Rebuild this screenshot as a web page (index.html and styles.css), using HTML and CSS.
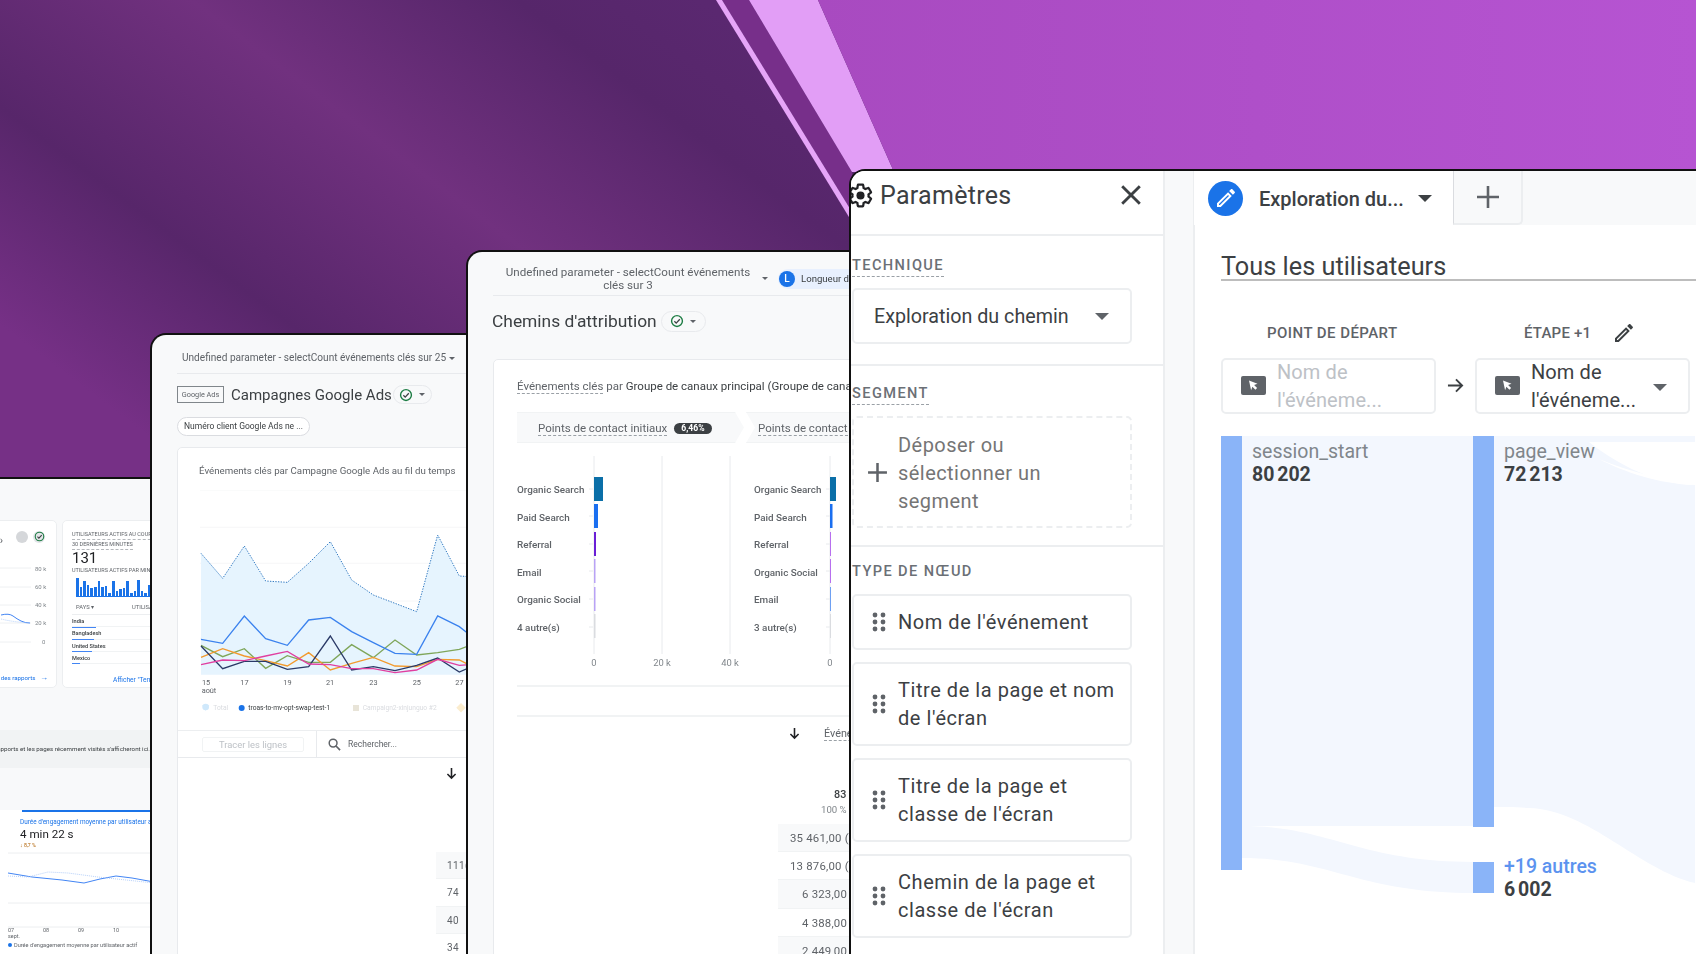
FILE: index.html
```html
<!DOCTYPE html>
<html lang="fr">
<head>
<meta charset="utf-8">
<title>Google Analytics : explorations</title>
<link rel="stylesheet" href="styles.css">
</head>
<body>
<svg width="0" height="0" class="defs">
  <symbol id="i-check" viewBox="0 0 16 16"><circle cx="8" cy="8" r="6.2" fill="none" stroke="#1e7d45" stroke-width="1.6"/><path d="M5 8.3l2.1 2.1L11.2 6" fill="none" stroke="#3c4043" stroke-width="1.5"/></symbol>
  <symbol id="i-pencil" viewBox="0 0 24 24"><path d="M14.06 9.02l.92.92L5.92 19H5v-.92l9.06-9.06M17.66 3c-.25 0-.51.1-.7.29l-1.83 1.83 3.75 3.75 1.83-1.83c.39-.39.39-1.02 0-1.41l-2.34-2.34c-.2-.2-.45-.29-.71-.29zm-3.6 3.19L3 17.25V21h3.75L17.81 9.94l-3.75-3.75z"/></symbol>
  <symbol id="i-grip" viewBox="0 0 14 20"><circle cx="3" cy="3" r="2.4"/><circle cx="11" cy="3" r="2.4"/><circle cx="3" cy="10" r="2.4"/><circle cx="11" cy="10" r="2.4"/><circle cx="3" cy="17" r="2.4"/><circle cx="11" cy="17" r="2.4"/></symbol>
  <symbol id="i-cursor" viewBox="0 0 25 19"><rect width="25" height="19" rx="2" fill="#5f6368"/><path d="M8 4.5l8.5 3.3-3.4 1.3 3 3-1.7 1.7-3-3-1.3 3.4z" fill="#fff"/></symbol>
  <symbol id="i-arrow-down" viewBox="0 0 12 14"><path d="M6 1v11M1.6 7.6L6 12l4.4-4.4" fill="none" stroke="#202124" stroke-width="1.7"/></symbol>
</svg>

<main class="desktop">
  <svg class="wallpaper" viewBox="0 0 1696 954" aria-hidden="true">
    <defs>
      <linearGradient id="bg-dark" gradientUnits="userSpaceOnUse" x1="-156" y1="208" x2="252" y2="-336">
        <stop offset="0" stop-color="#763086"/>
        <stop offset=".257" stop-color="#57266a"/>
        <stop offset=".551" stop-color="#71317f"/>
        <stop offset=".838" stop-color="#56266a"/>
        <stop offset="1" stop-color="#5a2870"/>
      </linearGradient>
      <linearGradient id="bg-light" x1="0" y1="0" x2="1" y2="0">
        <stop offset="0" stop-color="#a84ac0"/>
        <stop offset="1" stop-color="#b654d2"/>
      </linearGradient>
    </defs>
    <rect width="1696" height="954" fill="url(#bg-dark)"/>
    <polygon points="722,0 749,0 852,172 852,212" fill="#772f8a"/>
    <polygon points="716,0 722,0 852,212 852,222" fill="#e6a5f8"/>
    <polygon points="749,0 818,0 894,172 852,172" fill="#e29ef6"/>
    <polygon points="818,0 1696,0 1696,172 894,172" fill="url(#bg-light)"/>
  </svg>

  <!-- Fenêtre 1 : aperçu -->
  <section class="win win-a">
    <div class="a-cards">
      <div class="a-card a-card-chart">
        <div class="a-tools">
          <span class="a-chev">›</span>
          <span class="a-tool a-tool-grey"></span>
          <span class="a-tool"><svg class="ic-10"><use href="#i-check"/></svg></span>
        </div>
        <svg class="a-chart" viewBox="0 0 155 112">
          <g fill="none" stroke="#eef0f2"><path d="M0 6h135M0 25h135M0 43h135M0 61h135M0 80h135"/></g>
          <g class="tick"><text x="139" y="9">80 k</text><text x="139" y="27">60 k</text><text x="139" y="45">40 k</text><text x="139" y="63">20 k</text><text x="146" y="82">0</text></g>
          <path d="M105 53q8-2 12 1t8 5 9 2" fill="none" stroke="#4285f4" stroke-width="1"/>
          <path d="M105 57q12 3 29 4" fill="none" stroke="#a3c4f7" stroke-width=".8" stroke-dasharray="1 1"/>
        </svg>
        <div class="a-foot">des rapports <span class="a-arrow">→</span></div>
      </div>
      <div class="a-card a-card-live">
        <p class="a-cap a-dash">UTILISATEURS ACTIFS AU COURS DES</p>
        <p class="a-cap a-dash">30 DERNIÈRES MINUTES</p>
        <p class="a-num">131</p>
        <p class="a-cap">UTILISATEURS ACTIFS PAR MINUTE</p>
        <div class="a-bars">
          <i class="h20"></i><i class="h9"></i><i class="h15"></i><i class="h11"></i><i class="h8"></i><i class="h9"></i><i class="h15"></i><i class="h9"></i><i class="h10"></i><i class="h3"></i><i class="h15"></i><i class="h5"></i><i class="h7"></i><i class="h8"></i><i class="h15"></i><i class="h3"></i><i class="h5"></i><i class="h16"></i><i class="h5"></i><i class="h3"></i><i class="h11"></i>
        </div>
        <div class="a-head"><span>PAYS ▾</span><span>UTILISATEURS</span></div>
        <div class="a-row"><span>India</span><i class="w24"></i></div>
        <div class="a-row"><span>Bangladesh</span><i class="w22"></i></div>
        <div class="a-row"><span>United States</span><i class="w20"></i></div>
        <div class="a-row"><span>Mexico</span><i class="w8"></i></div>
        <div class="a-link">Afficher "Temps réel"</div>
      </div>
    </div>
    <div class="a-band">Les rapports et les pages récemment visités s'afficheront ici.</div>
    <div class="a-panel">
      <div class="a-panel-rule"></div>
      <p class="a-metric-name">Durée d'engagement moyenne par utilisateur actif</p>
      <p class="a-metric">4 min 22 s</p>
      <p class="a-delta">↓ 8,7 %</p>
      <svg class="a-mini" viewBox="0 0 146 76">
        <g fill="none" stroke="#eceef0"><path d="M0 1h146M0 51h146M0 75h146"/></g>
        <path d="M0 21l24 4 30 3 22 3 16-4 16-3 16 2 22 4" fill="none" stroke="#4285f4" stroke-width="1"/>
        <path d="M0 24l20 1 20-5 20 1 30 4 56 6" fill="none" stroke="#a3c4f7" stroke-width=".8" stroke-dasharray="1 1"/>
      </svg>
      <div class="a-axis"><span>07<br>sept.</span><span>08</span><span>09</span><span>10</span></div>
      <p class="a-legend"><b></b>Durée d'engagement moyenne par utilisateur actif</p>
    </div>
  </section>

  <!-- Fenêtre 2 : campagnes -->
  <section class="win win-b">
    <div class="b-top">Undefined parameter - selectCount événements clés sur 25 <span class="tiny-caret"></span></div>
    <div class="b-title">
      <span class="b-logo">Google Ads</span>
      <h2>Campagnes Google Ads</h2>
      <span class="pill pill-b"><svg class="ic-12"><use href="#i-check"/></svg><span class="tiny-caret"></span></span>
    </div>
    <span class="b-chip">Numéro client Google Ads ne ...</span>
    <div class="b-card">
      <p class="b-card-title">Événements clés par Campagne Google Ads au fil du temps</p>
      <svg class="b-chart" viewBox="0 -90 840 720" width="280" height="240">
        <g stroke="#f1f3f4" stroke-width="2"><path d="M30 -90H840M30 22H840M30 130H840M30 243H840M30 355H840"/></g>
        <path d="M33 100L98 175 163 78 227 183 292 187 356 130 421 65 485 180 550 225 615 250 680 275 743 45 808 168 840 170V464H33Z" fill="#e6f4fe"/>
        <path d="M33 100L98 175 163 78 227 183 292 187 356 130 421 65 485 180 550 225 615 250 680 275 743 45 808 168 840 170" fill="none" stroke="#2f78c0" stroke-width="3" stroke-dasharray="4 4"/>
        <g fill="none" stroke-width="4">
          <polyline stroke="#7fa65a" points="33,376 98,410 163,386 227,445 292,407 356,427 421,427 485,374 550,413 615,360 680,405 743,398 808,388 840,376"/>
          <polyline stroke="#f29a2e" points="33,412 98,386 163,408 227,422 292,438 356,398 421,450 485,430 550,412 615,438 680,440 743,418 808,420 840,436"/>
          <polyline stroke="#2b3a67" points="33,378 98,446 163,424 227,424 292,448 356,440 421,348 485,450 550,440 615,452 680,436 743,414 808,456 840,442"/>
          <polyline stroke="#e03fa0" points="33,434 98,420 163,422 227,408 292,394 356,432 421,434 485,446 550,446 615,458 680,450 743,418 808,436 840,434"/>
          <polyline stroke="#3b82ee" points="33,358 98,370 163,288 227,356 292,376 356,300 421,292 485,335 550,368 615,400 680,403 743,288 808,320 840,345"/>
        </g>
        <g class="b-tick">
          <text x="36" y="494">15</text><text x="35" y="518">août</text><text x="151" y="494">17</text><text x="280" y="494">19</text><text x="408" y="494">21</text><text x="538" y="494">23</text><text x="668" y="494">25</text><text x="796" y="494">27</text>
        </g>
        <path d="M36 556h22l-11 16z" fill="#cfe8fb"/><circle cx="47" cy="561" r="10" fill="#cfe8fb"/>
        <text x="70" y="571" class="b-leg-off">Total</text>
        <circle cx="155" cy="564" r="9" fill="#1a73e8"/>
        <text x="175" y="571" class="b-leg-on">troas-to-mv-opt-swap-test-1</text>
        <rect x="489" y="555" width="18" height="18" fill="#e8e4d8"/>
        <text x="518" y="571" class="b-leg-off">Campaign2-xinjunguo #2</text>
        <rect x="803" y="553" width="20" height="20" transform="rotate(45 813 563)" fill="#fbeccd"/>
      </svg>
      <div class="b-tools">
        <span class="b-trace">Tracer les lignes</span>
        <span class="b-search">
          <svg class="ic-14" viewBox="0 0 14 14"><circle cx="5.5" cy="5.5" r="4.2" fill="none" stroke="#5f6368" stroke-width="1.6"/><path d="M8.6 8.6L13 13" stroke="#5f6368" stroke-width="1.8"/></svg>
          Rechercher...
        </span>
      </div>
      <div class="b-sort"><svg class="ic-12"><use href="#i-arrow-down"/></svg></div>
      <div class="b-rows">
        <div class="b-row b-alt">111(</div>
        <div class="b-row">74</div>
        <div class="b-row b-alt">40</div>
        <div class="b-row">34</div>
      </div>
    </div>
  </section>

  <!-- Fenêtre 3 : chemins d'attribution -->
  <section class="win win-c">
    <div class="c-top">
      <div class="c-param">Undefined parameter - selectCount événements clés sur 3</div>
      <span class="tiny-caret c-caret"></span>
      <span class="c-seg"><b>L</b><span>Longueur du chemin</span></span>
    </div>
    <div class="c-title">
      <h2>Chemins d'attribution</h2>
      <span class="pill pill-c"><svg class="ic-12"><use href="#i-check"/></svg><span class="tiny-caret"></span></span>
    </div>
    <div class="c-card">
      <p class="c-card-title"><span class="dash">Événements clés</span> par <span class="dark">Groupe de canaux principal (Groupe de canaux par défaut)</span></p>
      <div class="c-steps">
        <div class="c-step c-step-first"><span class="dash">Points de contact initiaux</span><em>6,46%</em></div>
        <div class="c-step c-step-next"><span class="dash">Points de contact</span></div>
      </div>
      <svg class="c-chart" viewBox="517 457 332 230" width="332" height="230">
        <path d="M594 457V655M662 457V655M730 457V655M830 457V655" stroke="#e8eaed"/>
        <path d="M589 490h4M589 517h4M589 545h4M589 572h4M589 600h4M589 628h4M826 490h4M826 517h4M826 545h4M826 572h4M826 600h4M826 628h4" stroke="#e8eaed"/>
        <g class="c-label">
          <text x="517" y="494">Organic Search</text><text x="517" y="522">Paid Search</text><text x="517" y="549">Referral</text><text x="517" y="577">Email</text><text x="517" y="604">Organic Social</text><text x="517" y="632">4 autre(s)</text>
          <text x="754" y="494">Organic Search</text><text x="754" y="522">Paid Search</text><text x="754" y="549">Referral</text><text x="754" y="577">Organic Social</text><text x="754" y="604">Email</text><text x="754" y="632">3 autre(s)</text>
        </g>
        <rect x="594" y="478" width="9" height="24" fill="#0b6fa8"/>
        <rect x="594" y="505" width="4" height="24" fill="#1a6ff0"/>
        <rect x="594" y="533" width="2" height="24" fill="#6a1fd6"/>
        <rect x="594" y="560" width="1.5" height="24" fill="#b9a3f5"/>
        <rect x="594" y="588" width="1.5" height="24" fill="#b9a3f5"/>
        <rect x="594" y="615" width="1.5" height="24" fill="#dadce0"/>
        <rect x="830" y="478" width="6" height="24" fill="#0b6fa8"/>
        <rect x="830" y="505" width="2.5" height="24" fill="#1a6ff0"/>
        <rect x="830" y="533" width="1" height="24" fill="#b76fee"/>
        <rect x="830" y="560" width="1" height="24" fill="#b76fee"/>
        <rect x="830" y="588" width="1" height="24" fill="#6ea0f2"/>
        <rect x="830" y="615" width="1" height="24" fill="#dadce0"/>
        <g class="c-tick"><text x="594" y="667">0</text><text x="662" y="667">20 k</text><text x="730" y="667">40 k</text><text x="830" y="667">0</text></g>
      </svg>
      <div class="c-rule"></div>
      <div class="c-table-head">
        <svg class="ic-12"><use href="#i-arrow-down"/></svg>
        <span class="dash c-col">Événements clés</span>
      </div>
      <div class="c-total"><strong>83 000,00</strong><small>100 % du total</small></div>
      <div class="c-rows">
        <div class="c-row c-alt c-r1">35 461,00 (42,7 %)</div>
        <div class="c-row c-r1">13 876,00 (16,7 %)</div>
        <div class="c-row c-alt c-r2">6 323,00 (7,6 %)</div>
        <div class="c-row c-r2">4 388,00 (5,3 %)</div>
        <div class="c-row c-alt c-r2">2 449,00 (2,9 %)</div>
      </div>
    </div>
  </section>

  <!-- Fenêtre 4 : exploration -->
  <section class="win win-d">
    <aside class="settings">
      <header class="set-head">
        <svg class="gear" viewBox="0 0 24 24"><path d="M19.14 12.94c.04-.3.06-.61.06-.94 0-.32-.02-.64-.07-.94l2.03-1.58c.18-.14.23-.41.12-.61l-1.92-3.32c-.12-.22-.37-.29-.59-.22l-2.39.96c-.5-.38-1.03-.7-1.62-.94l-.36-2.54c-.04-.24-.24-.41-.48-.41h-3.84c-.24 0-.43.17-.47.41l-.36 2.54c-.59.24-1.13.57-1.62.94l-2.39-.96c-.22-.08-.47 0-.59.22L2.74 8.87c-.12.21-.08.47.12.61l2.03 1.58c-.05.3-.09.63-.09.94s.02.64.07.94l-2.03 1.58c-.18.14-.23.41-.12.61l1.92 3.32c.12.22.37.29.59.22l2.39-.96c.5.38 1.03.7 1.62.94l.36 2.54c.05.24.24.41.48.41h3.84c.24 0 .44-.17.47-.41l.36-2.54c.59-.24 1.13-.56 1.62-.94l2.39.96c.22.08.47 0 .59-.22l1.92-3.32c.12-.22.07-.47-.12-.61l-2.01-1.58z" fill="none" stroke="#202124" stroke-width="2"/><circle cx="12" cy="12" r="3.6" fill="#202124"/></svg>
        <h1>Paramètres</h1>
        <svg class="close" viewBox="0 0 20 20"><path d="M2 2l16 16M18 2L2 18" stroke="#3c4043" stroke-width="2.6"/></svg>
      </header>
      <div class="set-sec set-tech">
        <span class="set-label dashed">TECHNIQUE</span>
        <div class="select">Exploration du chemin<span class="caret"></span></div>
      </div>
      <div class="set-sec set-seg">
        <span class="set-label dashed">SEGMENT</span>
        <div class="drop">
          <svg class="plus" viewBox="0 0 20 20"><path d="M10 1v18M1 10h18" stroke="#5f6368" stroke-width="2.4"/></svg>
          <span>Déposer ou sélectionner un segment</span>
        </div>
      </div>
      <div class="set-sec set-type">
        <span class="set-label">TYPE DE NŒUD</span>
        <div class="node"><svg class="grip"><use href="#i-grip"/></svg><span>Nom de l'événement</span></div>
        <div class="node node-2"><svg class="grip"><use href="#i-grip"/></svg><span>Titre de la page et nom de l'écran</span></div>
        <div class="node node-2"><svg class="grip"><use href="#i-grip"/></svg><span>Titre de la page et classe de l'écran</span></div>
        <div class="node node-2"><svg class="grip"><use href="#i-grip"/></svg><span>Chemin de la page et classe de l'écran</span></div>
      </div>
    </aside>
    <div class="work">
      <nav class="tabs">
        <div class="tab">
          <span class="tab-badge"><svg viewBox="0 0 24 24"><use href="#i-pencil"/></svg></span>
          <span class="tab-name">Exploration du...</span>
          <span class="caret caret-dark"></span>
        </div>
        <div class="tab-add"><svg viewBox="0 0 24 24"><path d="M12 1v22M1 12h22" stroke="#5f6368" stroke-width="2.6"/></svg></div>
      </nav>
      <div class="canvas">
        <div class="seg-name">Tous les utilisateurs</div>
        <div class="steps-head">
          <span class="step-h">POINT DE DÉPART</span>
          <span class="step-h step-edit">ÉTAPE +1 <svg class="edit"><use href="#i-pencil"/></svg></span>
        </div>
        <div class="steps-row">
          <div class="ev ev-off"><svg class="cur"><use href="#i-cursor"/></svg><span>Nom de l'événeme...</span></div>
          <svg class="to" viewBox="0 0 18 18"><path d="M1 9h15M9.5 2.5L16 9l-6.5 6.5" fill="none" stroke="#3c4043" stroke-width="2"/></svg>
          <div class="ev"><svg class="cur"><use href="#i-cursor"/></svg><span>Nom de l'événeme...</span><i class="caret"></i></div>
        </div>
        <svg class="sankey" viewBox="1222 436 474 518" width="474" height="518">
          <path d="M1243 436H1474V826H1243Z" fill="#f3f7fe"/>
          <path d="M1243 826C1330 826 1360 862 1474 862V893C1360 893 1330 858 1243 858Z" fill="#f3f7fe"/>
          <path d="M1495 436H1696V442H1495Z" fill="#f3f7fe"/>
          <path d="M1495 442H1590C1610 458 1650 484 1696 485V883C1640 870 1590 810 1530 808 1515 807 1505 807 1495 807Z" fill="#f3f7fe"/>
          <path d="M1600 459C1625 472 1660 484 1696 485 1660 478 1630 472 1600 459Z" fill="#fff"/>
          <rect x="1222" y="436" width="21" height="434" fill="#8ab4f8"/>
          <rect x="1474" y="436" width="21" height="391" fill="#8ab4f8"/>
          <rect x="1474" y="862" width="21" height="31" fill="#8ab4f8"/>
          <text x="1253" y="458" class="sk-name">session_start</text>
          <text x="1253" y="481" class="sk-val">80 202</text>
          <text x="1505" y="458" class="sk-name">page_view</text>
          <text x="1505" y="481" class="sk-val">72 213</text>
          <text x="1505" y="873" class="sk-more">+19 autres</text>
          <text x="1505" y="896" class="sk-val">6 002</text>
        </svg>
      </div>
    </div>
  </section>
</main>
</body>
</html>
```

FILE: styles.css
```css
* { box-sizing: border-box; }
html, body { margin: 0; padding: 0; height: 100%; overflow: hidden; }
body { font-family: Roboto, "Liberation Sans", sans-serif; color: #3c4043; }
h1, h2, p { margin: 0; font-weight: 400; }
.defs { position: absolute; }
.desktop { position: relative; width: 1696px; height: 954px; overflow: hidden; }
.wallpaper { position: absolute; inset: 0; width: 1696px; height: 954px; display: block; }

.win { position: absolute; overflow: hidden; background: #f8f9fa; border: 2px solid #111; border-bottom: 0; border-right: 0; border-top-left-radius: 16px; }
.win-a { left: -200px; top: 477px; width: 400px; height: 477px; filter: blur(.35px); }
.win-b { left: 150px; top: 333px; width: 340px; height: 621px; filter: blur(.3px); }
.win-c { left: 466px; top: 250px; width: 420px; height: 704px; filter: blur(.3px); }
.win-d { left: 849px; top: 169px; width: 847px; height: 785px; display: grid; grid-template-columns: 314px 1fr; background: #fff; }

.ic-10 { width: 11px; height: 11px; }
.ic-12 { width: 13px; height: 13px; flex: none; }
.ic-14 { width: 13px; height: 13px; flex: none; }
.tiny-caret { display: inline-block; width: 0; height: 0; border: 3px solid transparent; border-top: 3.5px solid #5f6368; border-bottom: 0; vertical-align: middle; }
.pill { display: inline-flex; align-items: center; justify-content: center; gap: 6px; background: #f8f9fa; border: 1px solid #e8eaed; border-radius: 11px; }
.pill .ic-12 { width: 14px; height: 14px; }
.dash { border-bottom: 1px dashed #9aa0a6; }
.dark { color: #3c4043; }

/* Fenêtre 1 */
.a-cards { display: flex; gap: 5px; margin: 41px 0 0 40px; height: 168px; }
.a-card { background: #fff; border: 1px solid #eceef0; border-radius: 5px; overflow: hidden; flex: none; }
.a-card-chart { width: 215px; padding: 0; position: relative; }
.a-tools { display: flex; align-items: center; justify-content: flex-end; gap: 5px; height: 31px; padding: 0 11px 0 0; }
.a-chev { margin-right: 8px; margin-top: 8px; font-size: 11px; color: #5f6368; }
.a-tool { width: 12px; height: 12px; border-radius: 50%; background: #e3e5e8; display: flex; align-items: center; justify-content: center; }
.a-tool-grey { background: #d5d7da; }
.a-chart { display: block; width: 155px; height: 112px; margin-left: 53px; margin-top: 10px; }
.tick { font-size: 6px; fill: #80868b; font-family: Roboto, sans-serif; }
.a-foot { text-align: right; padding-right: 8px; font-size: 6.2px; color: #1a73e8; margin-top: -1px; }
.a-arrow { font-size: 8px; margin-left: 3px; }
.a-card-live { width: 200px; padding: 9px 0 0 9px; }
.a-cap { font-size: 5.5px; line-height: 9px; color: #5f6368; white-space: nowrap; width: max-content; }
.a-dash { border-bottom: 1px dashed #b4b7bb; }
.a-num { font-size: 15px; line-height: 15px; color: #202124; margin-top: 1px; }
.a-bars { display: flex; align-items: flex-end; gap: 1px; height: 19px; margin: 3px 0 0 4px; border-bottom: 1px solid #1a73e8; width: 100px; }
.a-bars i { display: block; width: 2.6px; background: #1a73e8; }
.h3 { height: 3px; } .h5 { height: 5px; } .h7 { height: 7px; } .h8 { height: 8px; } .h9 { height: 9px; } .h10 { height: 10px; } .h11 { height: 11px; } .h15 { height: 15px; } .h16 { height: 16px; } .h20 { height: 18px; }
.a-head { display: flex; gap: 38px; font-size: 5.8px; color: #5f6368; padding: 7px 0 4px 4px; border-bottom: 1px solid #eceef0; }
.a-row { height: 12.3px; font-size: 5.6px; line-height: 9px; padding-top: 2px; color: #3c4043; font-weight: 500; position: relative; border-bottom: 1px solid #f1f3f4; width: 130px; }
.a-row span { display: block; }
.a-row i { display: block; height: 1px; background: #4285f4; margin-top: .5px; }
.w24 { width: 24px; } .w22 { width: 22px; } .w20 { width: 20px; } .w8 { width: 8px; }
.a-link { font-size: 6.6px; color: #1a73e8; padding: 12px 0 0 41px; white-space: nowrap; }
.a-band { margin-top: 42px; height: 38px; background: #f1f3f4; font-size: 6.2px; line-height: 38px; white-space: nowrap; text-align: right; color: #3c4043; width: 348px; }
.a-panel { margin-top: 42px; margin-left: 0; height: 150px; background: #fff; padding-left: 218px; position: relative; }
.a-panel-rule { height: 2px; background: #1a73e8; width: 180px; margin-left: 2px; }
.a-metric-name { font-size: 6.4px; color: #1a73e8; white-space: nowrap; margin-top: 6px; line-height: 8px; }
.a-metric { font-size: 11.6px; line-height: 16px; color: #202124; margin-top: 0; white-space: nowrap; }
.a-delta { font-size: 5.2px; color: #b06000; line-height: 7px; }
.a-mini { display: block; width: 146px; height: 76px; margin: 3px 0 0 -12px; }
.a-axis { display: flex; margin-left: -12px; font-size: 5.4px; line-height: 5.6px; color: #5f6368; white-space: nowrap; }
.a-axis span { width: 35px; flex: none; }
.a-legend { margin: 3px 0 0 -12px; font-size: 5.6px; color: #5f6368; white-space: nowrap; display: flex; align-items: center; gap: 2px; }
.a-legend b { width: 4px; height: 4px; border-radius: 50%; background: #1a73e8; }

/* Fenêtre 2 */
.b-top { margin: 0 0 0 25px; height: 39px; border-bottom: 1px solid #e8eaed; padding: 16px 0 0 5px; font-size: 10.1px; line-height: 13px; color: #5f6368; white-space: nowrap; }
.b-title { display: flex; align-items: center; gap: 7px; height: 19px; margin: 11px 0 0 25px; }
.b-logo { width: 47px; height: 17px; border: 1px solid #80868b; font-size: 7.3px; line-height: 15px; text-align: center; color: #5f6368; }
.b-title h2 { font-size: 15px; color: #3c4043; white-space: nowrap; }
.pill-b { width: 39px; height: 19px; margin-left: -6px; }
.b-chip { display: block; width: 133px; height: 19px; margin: 13px 0 0 25px; border: 1px solid #dadce0; border-radius: 10px; font-size: 8.5px; line-height: 17px; padding-left: 6px; background: #fff; white-space: nowrap; color: #3c4043; }
.b-card { margin: 11px 0 0 25px; background: #fff; border: 1px solid #e8eaed; border-radius: 5px 0 0 0; height: 520px; overflow: hidden; }
.b-card-title { padding: 16px 0 0 21px; font-size: 9.7px; line-height: 13px; color: #5f6368; white-space: nowrap; }
.b-chart { display: block; margin: 13px 0 0 12px; }
.b-tick { font-size: 22px; fill: #5f6368; }
.b-leg-on { font-size: 20px; fill: #3c4043; }
.b-leg-off { font-size: 20px; fill: #dadce0; }
.b-tools { display: flex; align-items: center; height: 28px; border-top: 1px solid #eceef0; border-bottom: 1px solid #e8eaed; margin-top: 0; }
.b-trace { width: 102px; height: 15px; margin-left: 24px; border: 1px solid #f1f3f4; border-radius: 2px; font-size: 9.4px; line-height: 13px; text-align: center; color: #bdc1c6; flex: none; }
.b-search { display: flex; align-items: center; gap: 7px; margin-left: 12px; padding-left: 11px; height: 100%; border-left: 1px solid #e8eaed; font-size: 8.5px; color: #5f6368; white-space: nowrap; }
.b-sort { padding: 7px 0 0 267px; height: 21px; }
.b-rows { margin: 73px 0 0 258px; }
.b-row { height: 27.4px; font-size: 10px; line-height: 27px; padding-left: 11px; color: #5f6368; white-space: nowrap; border-bottom: 1px solid #f1f3f4; letter-spacing: .4px; }
.b-alt { background: #f8f9fa; }

/* Fenêtre 3 */
.c-top { display: flex; align-items: center; height: 44px; margin: 0 0 0 25px; border-bottom: 1px solid #e8eaed; padding-top: 10px; white-space: nowrap; }
.c-param { width: 270px; padding: 0 10px; text-align: center; font-size: 11.6px; line-height: 12.6px; white-space: normal; color: #5f6368; flex: none; }
.c-caret { margin-left: -1px; }
.c-seg { display: flex; align-items: center; gap: 6px; margin-left: 10px; height: 20px; padding-left: 1px; width: 120px; border-radius: 10px; background: #e8f0fe; font-size: 9.6px; color: #3c4043; flex: none; overflow: hidden; }
.c-seg b { width: 16px; height: 16px; margin-left: 0; border-radius: 50%; background: #1a73e8; color: #fff; font-size: 10px; font-weight: 500; text-align: center; line-height: 16px; flex: none; }
.c-title { display: flex; align-items: center; gap: 4px; margin: 14px 0 0 24px; height: 22px; }
.c-title h2 { font-size: 17.4px; white-space: nowrap; color: #3c4043; }
.pill-c { width: 45px; height: 21px; }
.c-card { margin: 27px 0 0 25px; height: 640px; background: #fff; border: 1px solid #e8eaed; border-radius: 5px 0 0 0; overflow: hidden; }
.c-card-title { padding: 19px 0 0 23px; height: 51px; font-size: 11.5px; line-height: 15px; white-space: nowrap; color: #5f6368; }
.c-steps { display: flex; gap: 2px; height: 31px; margin: 1px 0 0 23px; }
.c-step { display: flex; align-items: center; gap: 7px; padding-top: 1px; background: #f8f9fa; border-top: 1px solid #f1f3f4; border-bottom: 1px solid #f1f3f4; font-size: 11.5px; color: #5f6368; white-space: nowrap; flex: none; }
.c-step-first { width: 227px; padding-left: 21px; clip-path: polygon(0 0, 218px 0, 100% 50%, 218px 100%, 0 100%); }
.c-step-next { width: 140px; padding-left: 12px; clip-path: polygon(0 0, 100% 0, 100% 100%, 0 100%, 9px 50%); }
.c-step em { font-style: normal; font-size: 8.6px; font-weight: 700; color: #fff; background: #3c4043; border-radius: 6px; padding: 0 7px; line-height: 11px; }
.c-chart { display: block; margin: 13px 0 0 23px; }
.c-label { font-size: 9.9px; fill: #5f6368; font-weight: 500; }
.c-tick { font-size: 9.4px; fill: #80868b; text-anchor: middle; }
.c-rule { margin-left: 23px; height: 32px; border-top: 2px solid #f1f3f4; border-bottom: 2px solid #f1f3f4; margin-top: -1px; }
.c-table-head { display: flex; align-items: center; gap: 23px; margin-left: 294px; height: 33px; white-space: nowrap; font-size: 10.8px; color: #5f6368; }
.c-total { height: 74px; white-space: nowrap; padding-top: 37px; }
.c-total strong { display: block; font-size: 10.8px; font-weight: 500; color: #3c4043; line-height: 15px; padding-left: 340px; }
.c-total small { display: block; font-size: 9.6px; line-height: 15px; color: #80868b; padding-left: 327px; }
.c-rows { margin-left: 284px; }
.c-row { height: 28.2px; line-height: 28px; font-size: 11.4px; white-space: nowrap; color: #5f6368; border-bottom: 1px solid #f1f3f4; letter-spacing: .2px; }
.c-alt { background: #f8f9fa; }
.c-r1 { padding-left: 12px; }
.c-r2 { padding-left: 24px; }

/* Fenêtre 4 : panneau */
.settings { border-right: 2px solid #eceef0; background: #fff; min-height: 0; }
.set-head { display: flex; align-items: center; height: 65px; border-bottom: 2px solid #eceef0; padding-bottom: 15px; }
.gear { width: 27px; height: 27px; margin-left: -4px; flex: none; }
.set-head h1 { font-size: 25px; margin-left: 6px; letter-spacing: .3px; color: #3c4043; }
.close { width: 22px; height: 22px; margin-left: 108px; flex: none; }
.set-sec { border-bottom: 2px solid #eceef0; padding-left: 1px; }
.set-label { display: inline-block; font-size: 14.6px; line-height: 18px; font-weight: 500; letter-spacing: 1.4px; color: #6b7076; }
.dashed { border-bottom: 1.5px dashed #9aa0a6; padding-bottom: 2px; }
.set-tech { padding-top: 19px; height: 130px; }
.select { display: flex; align-items: center; justify-content: space-between; width: 280px; height: 56px; margin-top: 11px; padding: 0 21px 0 20px; border: 2px solid #eceef0; border-radius: 5px; font-size: 19.7px; color: #3c4043; }
.caret { display: inline-block; width: 0; height: 0; border: 7px solid transparent; border-top: 7px solid #5f6368; border-bottom: 0; flex: none; }
.caret-dark { border-top-color: #3c4043; }
.set-seg { padding-top: 17px; height: 181px; }
.drop { display: flex; align-items: center; width: 280px; height: 112px; margin-top: 11px; padding-left: 13px; border: 2px dashed #eceef0; border-radius: 5px; }
.plus { width: 21px; height: 21px; flex: none; }
.drop span { margin-left: 10px; padding-top: 1px; width: 170px; font-size: 20px; line-height: 28px; color: #757575; letter-spacing: .45px; }
.set-type { padding-top: 14px; border-bottom: 0; }
.node { display: flex; align-items: center; width: 280px; height: 56px; margin-top: 12px; padding-left: 18px; border: 2px solid #eceef0; border-radius: 5px; }
.set-label + .node { margin-top: 14px; }
.node-2 { height: 84px; }
.grip { width: 14px; height: 20px; fill: #5f6368; flex: none; }
.node span { margin-left: 12px; font-size: 20px; line-height: 28px; color: #3c4043; letter-spacing: .55px; width: 224px; }

/* Fenêtre 4 : exploration */
.work { background: #f8f9fa; padding-left: 28px; min-width: 0; display: flex; flex-direction: column; }
.tabs { display: flex; height: 54px; flex: none; }
.tab { display: flex; align-items: center; width: 260px; padding-left: 14px; background: #fff; border-left: 1px solid #eceef0; }
.tab-badge { width: 35px; height: 35px; border-radius: 50%; background: #1a73e8; display: flex; align-items: center; justify-content: center; flex: none; }
.tab-badge svg { width: 24px; height: 24px; fill: #fff; }
.tab-name { margin-left: 16px; padding-top: 2px; font-size: 20px; font-weight: 500; color: #3c4043; white-space: nowrap; width: 159px; }
.tab-add { width: 70px; display: flex; align-items: center; justify-content: center; border: 2px solid #eceef0; border-top: 0; border-left: 1px solid #dadce0; border-radius: 0 0 5px 0; }
.tab-add svg { width: 24px; height: 24px; }
.canvas { flex: 1; background: #fff; padding-left: 26px; border-left: 2px solid #eceef0; margin-left: 0; overflow: hidden; }
.seg-name { height: 56px; padding-top: 29px; font-size: 25.3px; line-height: 26px; color: #3c4043; border-bottom: 2px solid #bdbdbd; white-space: nowrap; }
.steps-head { display: flex; height: 77px; align-items: center; padding-top: 26px; font-size: 15px; font-weight: 500; color: #5f6368; letter-spacing: .45px; }
.step-h { white-space: nowrap; }
.step-h:first-child { margin-left: 46px; width: 257px; }
.step-edit { display: flex; align-items: center; letter-spacing: .2px; }
.edit { width: 24px; height: 24px; margin-left: 21px; fill: #3c4043; }
.steps-row { display: flex; align-items: center; gap: 11px; height: 55px; }
.ev { position: relative; display: flex; align-items: center; flex: none; width: 215px; height: 56px; padding-left: 18px; border: 2px solid #eceef0; border-radius: 5px; }
.cur { width: 25px; height: 19px; flex: none; }
.ev span { margin-left: 11px; width: 130px; font-size: 20px; line-height: 28px; color: #3c4043; letter-spacing: .1px; }
.ev-off span { color: #bdc1c6; }
.to { width: 17px; height: 17px; flex: none; }
.ev .caret { position: absolute; right: 21px; top: 24px; }
.sankey { display: block; margin-top: 23px; }
.sk-name { font-size: 19.5px; fill: #80868b; }
.sk-val { font-size: 19.5px; font-weight: 700; fill: #3c4043; word-spacing: -2px; }
.sk-more { font-size: 19.5px; font-weight: 500; fill: #5c93ef; }
```
